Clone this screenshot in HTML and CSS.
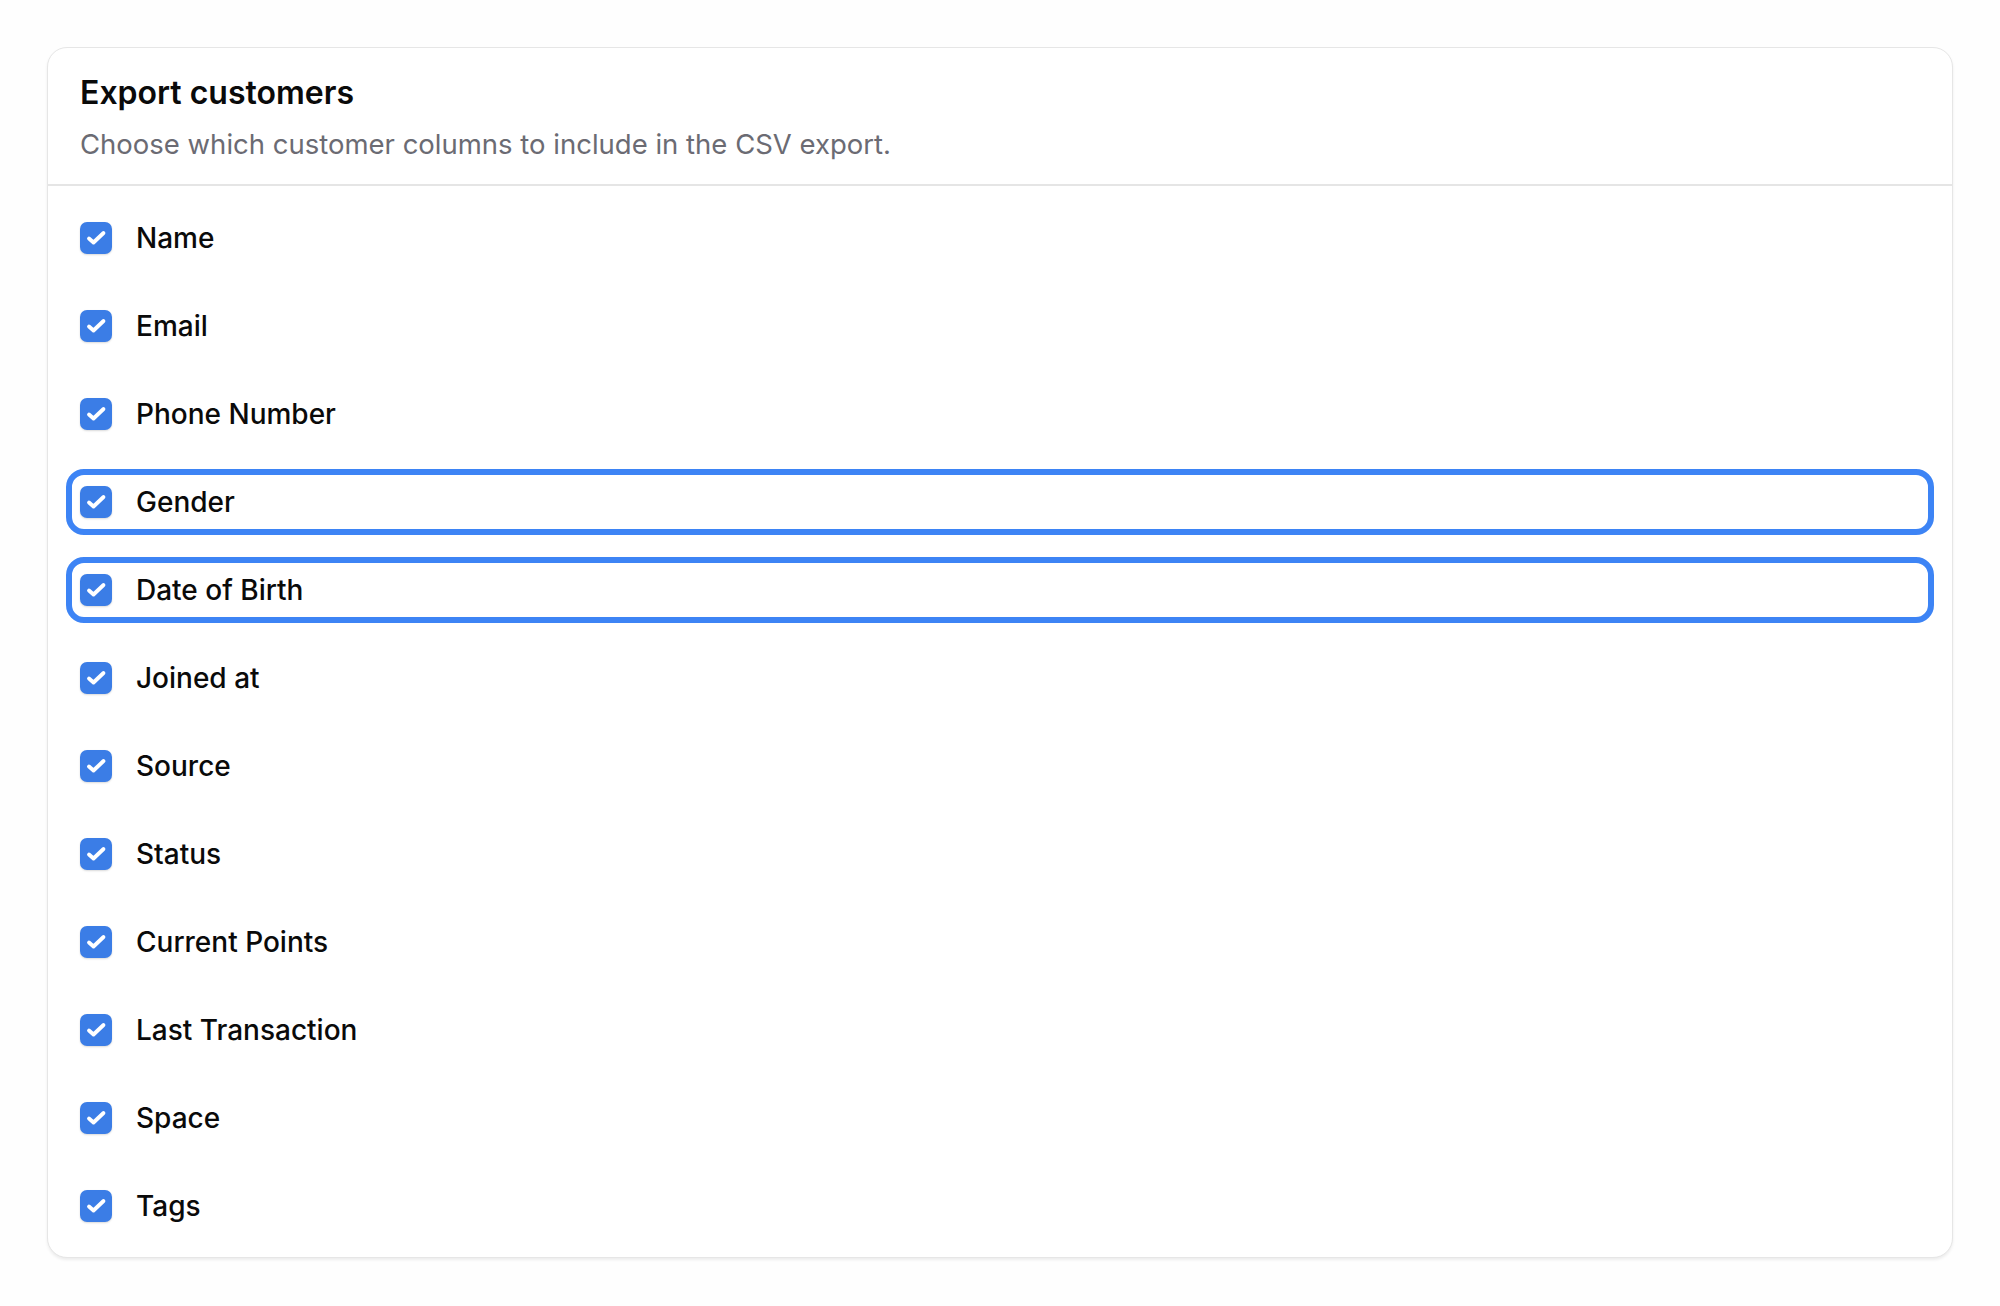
FILE: index.html
```html
<!DOCTYPE html>
<html lang="en">
<head>
<meta charset="utf-8">
<title>Export customers</title>
<link rel="stylesheet" href="styles.css">
</head>
<body>
<main class="page">
  <section class="card">
    <header class="card-header">
      <h1 class="title">Export customers</h1>
      <p class="subtitle">Choose which customer columns to include in the CSV export.</p>
    </header>
    <div class="list">
      <label class="row"><span class="box"><svg viewBox="0 0 32 32"><path d="M9 16.5l4.5 4 10-9.5"/></svg></span><span class="label">Name</span></label>
      <label class="row"><span class="box"><svg viewBox="0 0 32 32"><path d="M9 16.5l4.5 4 10-9.5"/></svg></span><span class="label">Email</span></label>
      <label class="row"><span class="box"><svg viewBox="0 0 32 32"><path d="M9 16.5l4.5 4 10-9.5"/></svg></span><span class="label">Phone Number</span></label>
      <label class="row focused"><span class="box"><svg viewBox="0 0 32 32"><path d="M9 16.5l4.5 4 10-9.5"/></svg></span><span class="label">Gender</span></label>
      <label class="row focused"><span class="box"><svg viewBox="0 0 32 32"><path d="M9 16.5l4.5 4 10-9.5"/></svg></span><span class="label">Date of Birth</span></label>
      <label class="row"><span class="box"><svg viewBox="0 0 32 32"><path d="M9 16.5l4.5 4 10-9.5"/></svg></span><span class="label">Joined at</span></label>
      <label class="row"><span class="box"><svg viewBox="0 0 32 32"><path d="M9 16.5l4.5 4 10-9.5"/></svg></span><span class="label">Source</span></label>
      <label class="row"><span class="box"><svg viewBox="0 0 32 32"><path d="M9 16.5l4.5 4 10-9.5"/></svg></span><span class="label">Status</span></label>
      <label class="row"><span class="box"><svg viewBox="0 0 32 32"><path d="M9 16.5l4.5 4 10-9.5"/></svg></span><span class="label">Current Points</span></label>
      <label class="row"><span class="box"><svg viewBox="0 0 32 32"><path d="M9 16.5l4.5 4 10-9.5"/></svg></span><span class="label">Last Transaction</span></label>
      <label class="row"><span class="box"><svg viewBox="0 0 32 32"><path d="M9 16.5l4.5 4 10-9.5"/></svg></span><span class="label">Space</span></label>
      <label class="row"><span class="box"><svg viewBox="0 0 32 32"><path d="M9 16.5l4.5 4 10-9.5"/></svg></span><span class="label">Tags</span></label>
    </div>
  </section>
</main>
</body>
</html>
```
FILE: styles.css
```css
* { box-sizing: border-box; }
html, body { margin: 0; padding: 0; background: #fefefe; }
body { font-family: Inter, "Noto Sans", sans-serif; color: #0a0a0a; }
.page { padding: 47px; }
.card {
  background: #fff;
  border: 1px solid #e6e6e6;
  border-radius: 20px;
  box-shadow: 0 2px 3px rgba(0,0,0,0.07);
}
.card-header {
  padding: 25px 32px 22px;
  border-bottom: 2px solid #e5e5e5;
}
.title {
  margin: 0;
  font-size: 32px;
  font-weight: 600;
  line-height: 40px;
  letter-spacing: 0;
}
.subtitle {
  margin: 13px 0 0;
  font-size: 27.5px;
  line-height: 36px;
  color: #6b6b73;
}
.list {
  padding: 19px 18px 18px;
  display: flex;
  flex-direction: column;
  gap: 22px;
}
.row {
  display: flex;
  align-items: center;
  gap: 24px;
  height: 66px;
  padding: 0 8px;
  border: 6px solid transparent;
  border-radius: 18px;
}
.row.focused {
  border-color: #3d84f5;
}
.box {
  width: 32px;
  height: 32px;
  border-radius: 7px;
  background: #3b7de6;
  box-shadow: 0 1px 2px rgba(0,0,0,0.15);
  display: flex;
  align-items: center;
  justify-content: center;
  flex: none;
}
.box svg {
  width: 32px;
  height: 32px;
  fill: none;
  stroke: #fff;
  stroke-width: 3.8;
  stroke-linecap: round;
  stroke-linejoin: round;
}
.label {
  font-size: 28px;
  font-weight: 500;
  color: #0a0a0a;
}
```
